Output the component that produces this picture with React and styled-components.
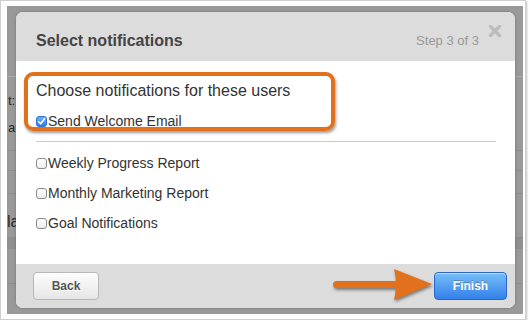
import React from "react";
import styled, { createGlobalStyle } from "styled-components";

const GlobalStyle = createGlobalStyle`
  html, body {
    margin: 0;
    padding: 0;
    background: #ffffff;
  }
  body {
    font-family: "Liberation Sans", Arial, sans-serif;
  }
`;

const Frame = styled.div`
  width: 526px;
  height: 320px;
  box-sizing: border-box;
  border: 1px solid #cfcfcf;
  padding: 5px 2px 5px 6px;
  background: #ffffff;
  box-shadow: 1px 1px 2px rgba(0, 0, 0, 0.25);
`;

const Backdrop = styled.div`
  position: relative;
  width: 100%;
  height: 100%;
  background: #999999;
  overflow: hidden;
`;

const Page = styled.div`
  display: flex;
  flex-direction: column;
`;

const PageRow = styled.div`
  height: ${(p) => p.$h}px;
  box-sizing: border-box;
  border-bottom: 1px solid ${(p) => (p.$light ? "#ababab" : "#8e8e8e")};
  background: ${(p) => (p.$dark ? "#8f8f8f" : "transparent")};
  padding: ${(p) => p.$pad || "0"};
  color: #2a2a2a;
  font-size: ${(p) => p.$size || 13}px;
  line-height: ${(p) => p.$lh || 27}px;
  white-space: nowrap;
`;

const Modal = styled.div`
  position: absolute;
  left: 9px;
  top: 6px;
  width: 499px;
  height: 296px;
  border-radius: 7px;
  overflow: hidden;
  background: #ffffff;
  display: flex;
  flex-direction: column;
  box-shadow: 0 0 3px rgba(0, 0, 0, 0.25);
`;

const Header = styled.div`
  height: 49px;
  box-sizing: border-box;
  background: #dcdcdc;
  display: flex;
  align-items: center;
  padding: 8px 13px 0 20px;
`;

const Title = styled.h2`
  margin: 0;
  font-size: 16px;
  font-weight: bold;
  color: #444444;
`;

const Step = styled.span`
  margin-left: auto;
  font-size: 13px;
  color: #999999;
`;

const Close = styled.button`
  align-self: flex-start;
  margin: 5px 0 0 9px;
  padding: 0;
  border: 0;
  background: none;
  width: 14px;
  height: 12px;
  display: flex;
  cursor: pointer;
`;

const Body = styled.div`
  flex: 1;
  padding: 11px 19px 0 8px;
`;

const Highlight = styled.div`
  width: 311px;
  box-sizing: border-box;
  border: 4px solid #e2711d;
  border-radius: 9px;
  padding: 5px 8px 0 8px;
  box-shadow: 1px 2px 3px rgba(0, 0, 0, 0.4);
`;

const Heading = styled.div`
  font-size: 16px;
  line-height: 20px;
  color: #333333;
`;

const Option = styled.label`
  display: flex;
  align-items: center;
  height: ${(p) => p.$h}px;
  margin-top: ${(p) => p.$mt || 0}px;
  font-size: 14px;
  color: #333333;
  white-space: nowrap;
`;

const Box = styled.span`
  width: 11px;
  height: 11px;
  box-sizing: border-box;
  margin-right: 1px;
  border-radius: 3px;
  display: flex;
  align-items: center;
  justify-content: center;
  border: 1px solid ${(p) => (p.$checked ? "#2d6fd2" : "#8a8a8a")};
  background: ${(p) =>
    p.$checked
      ? "linear-gradient(#6cb2f9, #2b80ef)"
      : "linear-gradient(#ffffff, #ececec)"};
`;

const Divider = styled.hr`
  margin: 10px 0 0 12px;
  border: 0;
  border-top: 1px solid #cccccc;
  height: 0;
`;

const List = styled.div`
  padding: 6px 0 0 12px;
`;

const Footer = styled.div`
  height: 44px;
  box-sizing: border-box;
  background: #dcdcdc;
  display: flex;
  align-items: center;
  justify-content: space-between;
  padding: 0 8px 0 17px;
`;

const Button = styled.button`
  height: 28px;
  width: ${(p) => p.$w}px;
  border-radius: 4px;
  font-family: "Liberation Sans", Arial, sans-serif;
  font-size: 12px;
  font-weight: bold;
  padding: 0;
  cursor: pointer;
  border: 1px solid ${(p) => (p.$primary ? "#2a66cc" : "#b7b7b7")};
  color: ${(p) => (p.$primary ? "#ffffff" : "#555555")};
  background: ${(p) =>
    p.$primary
      ? "linear-gradient(#78bef8, #3380ea)"
      : "linear-gradient(#fdfdfd, #e6e6e6)"};
  text-shadow: ${(p) =>
    p.$primary ? "0 -1px 0 rgba(0,0,0,0.25)" : "0 1px 0 #ffffff"};
  box-shadow: inset 0 1px 0 rgba(255, 255, 255, 0.5);
`;

const Arrow = styled.svg`
  position: absolute;
  left: 310px;
  top: 252px;
  filter: drop-shadow(1px 2px 1.5px rgba(0, 0, 0, 0.45));
`;

function Check({ checked }) {
  return (
    <Box $checked={checked}>
      {checked && (
        <svg width="9" height="9" viewBox="0 0 9 9">
          <path
            d="M1.6 4.8 L3.6 6.8 L7.6 1.8"
            fill="none"
            stroke="#ffffff"
            strokeWidth="1.6"
            strokeLinecap="round"
            strokeLinejoin="round"
          />
        </svg>
      )}
    </Box>
  );
}

const options = [
  "Weekly Progress Report",
  "Monthly Marketing Report",
  "Goal Notifications",
];

export default function App() {
  return (
    <>
      <GlobalStyle />
      <Frame>
        <Backdrop>
          <Page>
            <PageRow $h={71} $light />
            <PageRow $h={74} $pad="10px 0 0 1px">
              t: s
              <br />
              ar
            </PageRow>
            <PageRow $h={20} />
            <PageRow $h={23} />
            <PageRow $h={44} $size={16} $lh={20} $pad="18px 0 0 0">
              la
            </PageRow>
            <PageRow $h={11} $dark />
            <PageRow $h={35} />
          </Page>

          <Modal>
            <Header>
              <Title>Select notifications</Title>
              <Step>Step 3 of 3</Step>
              <Close aria-label="Close">
                <svg width="14" height="12" viewBox="0 0 14 12">
                  <path
                    d="M2.5 1.5 L11.5 10.5 M11.5 1.5 L2.5 10.5"
                    stroke="#bcbcbc"
                    strokeWidth="3.4"
                    strokeLinecap="round"
                  />
                </svg>
              </Close>
            </Header>

            <Body>
              <Highlight>
                <Heading>Choose notifications for these users</Heading>
                <Option $h={12} $mt={14}>
                  <Check checked />
                  Send Welcome Email
                </Option>
              </Highlight>
              <Divider />
              <List>
                {options.map((o) => (
                  <Option key={o} $h={30}>
                    <Check />
                    {o}
                  </Option>
                ))}
              </List>
            </Body>

            <Footer>
              <Button $w={66}>Back</Button>
              <Button $w={73} $primary>
                Finish
              </Button>
            </Footer>

            <Arrow width="112" height="44" viewBox="0 0 112 44">
              <rect x="7" y="17" width="66" height="7" rx="3.5" fill="#e2711d" />
              <path d="M68 5 L106 20 L68 36 Q72 20 68 5 Z" fill="#e2711d" />
            </Arrow>
          </Modal>
        </Backdrop>
      </Frame>
    </>
  );
}
